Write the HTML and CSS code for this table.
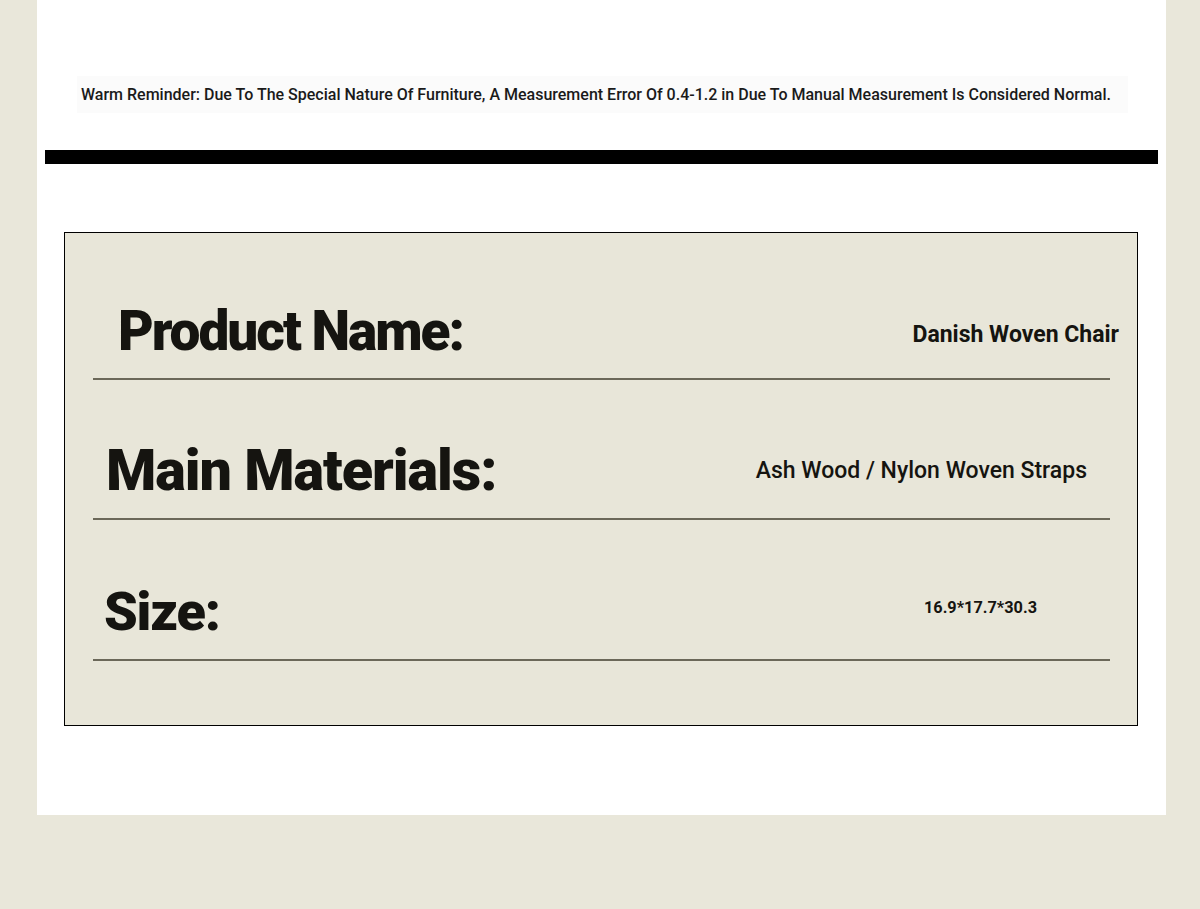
FILE: index.html
```html
<!DOCTYPE html>
<html lang="en">
<head>
<meta charset="utf-8">
<title>Danish Woven Chair</title>
<link rel="stylesheet" href="styles.css">
</head>
<body>
<div class="page">
  <div class="notice">Warm Reminder: Due To The Special Nature Of Furniture, A Measurement Error Of 0.4-1.2 in Due To Manual Measurement Is Considered Normal.</div>
  <div class="bar"></div>
  <div class="specs">
    <div class="row row-name">
      <div class="label">Product Name:</div>
      <div class="value value-bold">Danish Woven Chair</div>
    </div>
    <div class="row row-mat">
      <div class="label">Main Materials:</div>
      <div class="value value-medium">Ash Wood / Nylon Woven Straps</div>
    </div>
    <div class="row row-size">
      <div class="label">Size:</div>
      <div class="value value-small">16.9*17.7*30.3</div>
    </div>
  </div>
</div>
</body>
</html>
```

FILE: styles.css
```css
html, body {
  margin: 0;
  padding: 0;
  background: #e9e7da;
  font-family: Roboto, "Noto Sans", sans-serif;
  color: #151410;
}

.page {
  width: 1129px;
  height: 815px;
  margin-left: 37px;
  background: #ffffff;
  padding-top: 76px;
  box-sizing: border-box;
}

.notice {
  margin: 0 38px 0 40px;
  height: 37px;
  line-height: 37px;
  padding-left: 4px;
  background: #fbfbfb;
  font-size: 16px;
  font-weight: 500;
  white-space: nowrap;
  color: #1a1a1a;
}

.bar {
  margin: 37px 8px 0 8px;
  height: 14px;
  background: #000000;
}

.specs {
  margin: 68px 28px 0 27px;
  height: 494px;
  box-sizing: border-box;
  border: 1px solid #000000;
  background: #e8e6d9;
  padding: 7px 27px 0 28px;
}

.row {
  display: flex;
  align-items: center;
  justify-content: space-between;
  height: 140px;
  box-sizing: border-box;
  padding-top: 44px;
  border-bottom: 2px solid #6b6859;
}

.row-size {
  height: 141px;
}

.label {
  font-weight: 900;
  line-height: 1;
  white-space: nowrap;
}

.value {
  line-height: 1;
  white-space: nowrap;
}

.value-bold {
  font-size: 23px;
  font-weight: 700;
}

.value-medium {
  font-size: 23px;
  font-weight: 500;
}

.value-small {
  font-size: 16.3px;
  font-weight: 700;
}

.row-name .label { margin-left: 25px; font-size: 55px; letter-spacing: -2.05px; }
.row-name .value { margin-right: -9px; margin-top: 6px; }

.row-mat .label { margin-left: 13px; font-size: 57.5px; letter-spacing: -1.05px; }
.row-mat .value { margin-right: 23px; margin-top: -2px; }

.row-size .label { margin-left: 11px; font-size: 54px; letter-spacing: -1.2px; }
.row-size .value { margin-right: 73px; margin-top: -6px; }
```
